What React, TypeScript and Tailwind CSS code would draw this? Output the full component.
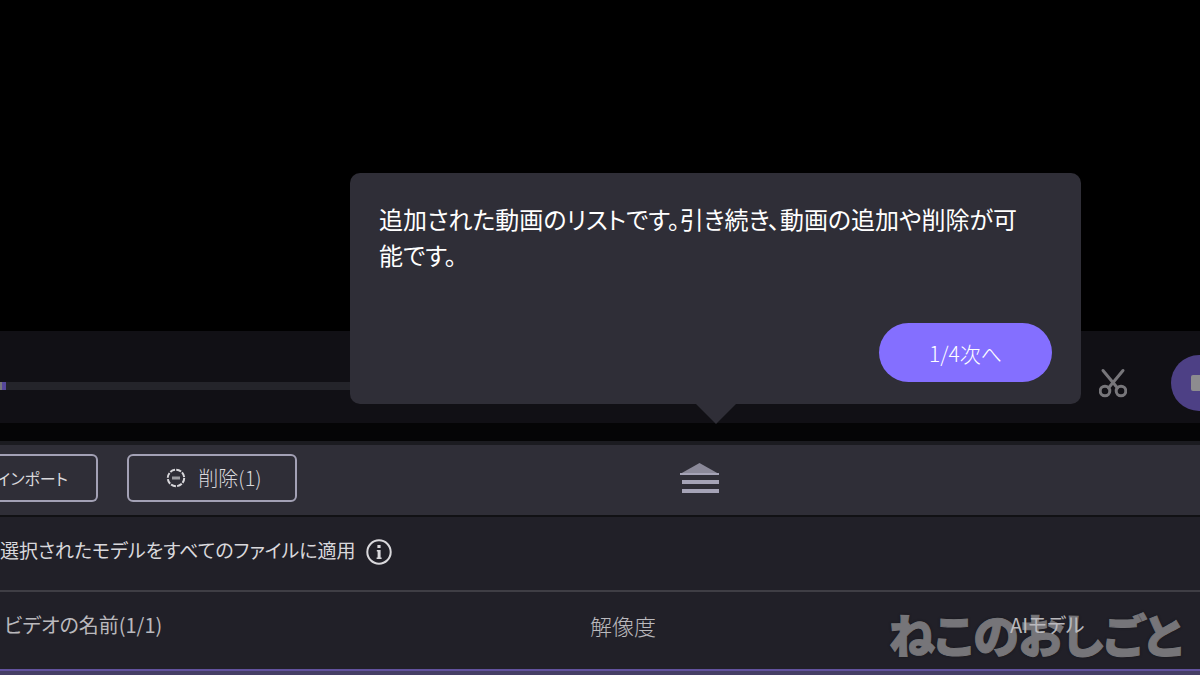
import React, { useState } from 'react';

const TrimIcon = () => (
  <svg viewBox="0 0 28 30" className="w-7 h-[30px]" fill="none" stroke="currentColor" strokeWidth="3" aria-hidden="true">
    <path d="M4 2.5 18.5 20M24 2.5 9.5 20" strokeLinecap="round" />
    <circle cx="6" cy="23" r="4.8" />
    <circle cx="22" cy="23" r="4.8" />
  </svg>
);

const RemoveIcon = () => (
  <svg viewBox="0 0 20 20" className="w-5 h-5" fill="none" stroke="currentColor" aria-hidden="true">
    <circle cx="10" cy="10" r="8.2" strokeWidth="2" strokeDasharray="5.2 1.24" />
    <path d="M6 10h8" strokeWidth="3" opacity="0.65" />
  </svg>
);

const InfoIcon = () => (
  <svg viewBox="0 0 26 26" className="w-[26px] h-[26px]" aria-hidden="true">
    <circle cx="13" cy="13" r="11.7" fill="none" stroke="currentColor" strokeWidth="2" />
    <path d="M11.4 6h3.2v3h-3.2zM10.8 11h3.8v7.5h1V20h-5v-1.5h1v-6h-.8z" fill="currentColor" />
  </svg>
);

const ExpandIcon = () => (
  <svg viewBox="0 0 40 32" className="w-10 h-8" aria-hidden="true">
    <path d="M0 12 19.5 1 39 12z" fill="#8b8999" />
    <path d="M0 11h39v2H0zM2 18h37v4H2zM2 27h37v4H2z" fill="#a5a3b6" />
  </svg>
);

const PlayerBar = () => {
  const [position, setPosition] = useState(0);

  return (
    <div className="h-[92px] bg-[#111015] flex items-center pt-3">
      <input
        type="range"
        aria-label="再生位置"
        value={position}
        onChange={(e) => setPosition(Number(e.target.value))}
        className="flex-1 min-w-0 h-2 mt-1.5 appearance-none bg-[#24242a] [&::-webkit-slider-thumb]:appearance-none [&::-webkit-slider-thumb]:w-1.5 [&::-webkit-slider-thumb]:h-2 [&::-webkit-slider-thumb]:bg-[#56479a] [&::-webkit-slider-thumb]:border-l-2 [&::-webkit-slider-thumb]:border-[#77767a]"
      />
      <button aria-label="カット" className="ml-8 mr-11 shrink-0 text-[#77767a]">
        <TrimIcon />
      </button>
      <button aria-label="停止" className="w-14 h-14 -mr-[27px] shrink-0 rounded-full bg-[#4d4085] flex items-center justify-center">
        <span className="w-4 h-4 rounded-xs bg-[#8d8c8f]" />
      </button>
    </div>
  );
};

const GuideTip = () => (
  <div
    role="dialog"
    aria-label="ガイド"
    className="absolute left-[350px] right-[119px] bottom-[19px] rounded-[10px] bg-[#2f2e37] px-[29px] pt-7 pb-[22px] flex flex-col"
  >
    <p className="pr-5 text-[24px] leading-9 font-normal text-white">
      追加された動画のリストです。引き続き、動画の追加や削除が可能です。
    </p>
    <button className="mt-[50px] self-end w-[173px] h-[59px] rounded-full bg-[#846fff] text-[21px] leading-8 text-white">
      1/4次へ
    </button>
    <svg viewBox="0 0 40 20" className="absolute top-full left-1/2 -translate-x-1/2 w-10 h-5" aria-hidden="true">
      <path d="M0 0h40L20 20z" fill="#2f2e37" />
    </svg>
  </div>
);

export default function App() {
  return (
    <div className="min-h-screen bg-[#463f66] overflow-hidden flex flex-col font-['Noto_Sans_CJK_JP',sans-serif] font-light [font-feature-settings:'palt'] text-[#d9d8dc]">
      <div className="relative">
        <div className="h-[331px] bg-black" />
        <PlayerBar />
        <GuideTip />
      </div>

      <div className="h-[22px] bg-[#050506] border-b-4 border-[#1b1b20]" />

      <div className="h-[72px] pb-1 bg-[#2f2e37] border-b-2 border-[#111114] grid grid-cols-[1fr_40px_480px] items-center">
        <div className="flex items-center gap-[29px] leading-8">
          <button className="w-[98px] h-12 pr-7 border-2 border-l-0 border-[#a3a1b5] rounded-r-md text-[16px] font-normal whitespace-nowrap flex items-center justify-end">
            インポート
          </button>
          <button className="w-[170px] h-12 pl-1 border-2 border-[#a3a1b5] rounded-md text-[20px] flex items-center justify-center gap-3">
            <RemoveIcon />
            削除(1)
          </button>
        </div>
        <button aria-label="リストを展開">
          <ExpandIcon />
        </button>
      </div>

      <div className="h-[75px] bg-[#212028] border-b-2 border-[#3f3e45] flex items-center gap-2.5 pb-2">
        <span className="text-[19px] leading-8 font-normal">選択されたモデルをすべてのファイルに適用</span>
        <button aria-label="詳細情報" className="mt-1">
          <InfoIcon />
        </button>
      </div>

      <div className="relative">
        <table className="w-full table-fixed border-collapse text-left text-[20px] leading-8 text-[#bab9bd]">
          <thead>
            <tr className="h-[78px] bg-[#212028]">
              <th className="w-[49%] pl-1 pb-3 font-normal">ビデオの名前(1/1)</th>
              <th className="w-[35%] pl-0.5 pb-3 font-light text-[22px]">解像度</th>
              <th className="pl-0.5 pb-3 font-normal">
                <span className="relative z-10">AIモデル</span>
              </th>
            </tr>
          </thead>
          <tbody>
            <tr className="h-1 bg-[#463f66] border-t-2 border-[#62529e]">
              <td colSpan={3} />
            </tr>
          </tbody>
        </table>
        <div className="absolute right-[18px] top-[15px] text-[46px] leading-[52px] font-black text-[#767579] [-webkit-text-stroke:1px_#767579] text-shadow-[0_0_3px_#111114] pointer-events-none">
          ねこのおしごと
        </div>
      </div>
    </div>
  );
}
